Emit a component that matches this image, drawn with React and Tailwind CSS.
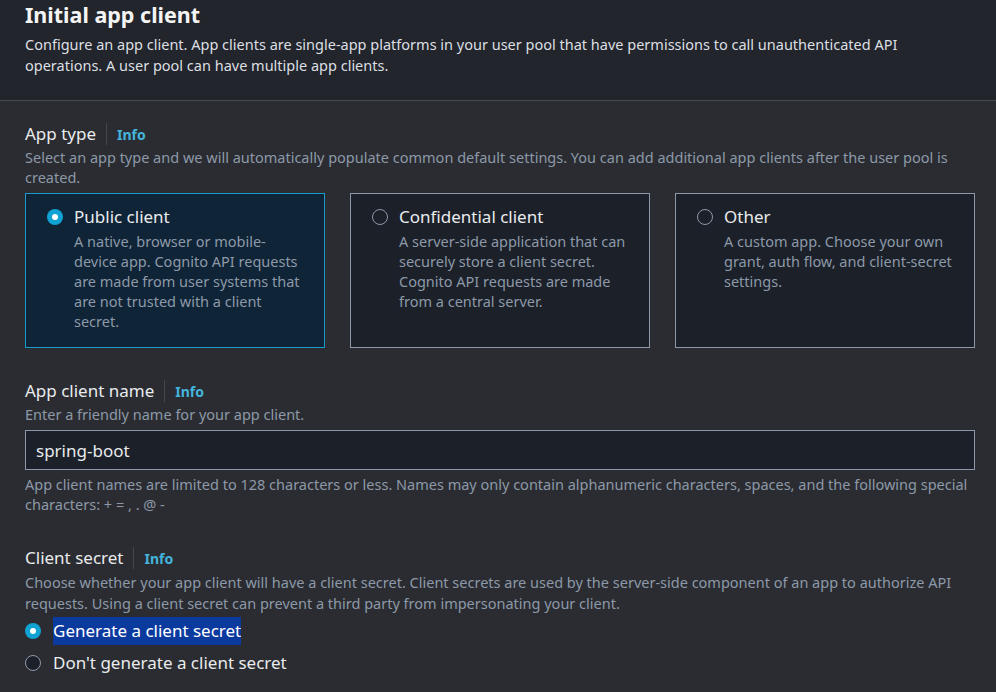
import React, { useState } from "react";

const font = { fontFamily: '"Noto Sans", "Open Sans", sans-serif' };

const appTypes = [
  {
    id: "public",
    title: "Public client",
    desc: "A native, browser or mobile-device app. Cognito API requests are made from user systems that are not trusted with a client secret.",
  },
  {
    id: "confidential",
    title: "Confidential client",
    desc: "A server-side application that can securely store a client secret. Cognito API requests are made from a central server.",
  },
  {
    id: "other",
    title: "Other",
    desc: "A custom app. Choose your own grant, auth flow, and client-secret settings.",
  },
];

const Radio = ({ checked }) =>
  checked ? (
    <span className="flex h-4 w-4 shrink-0 items-center justify-center rounded-full bg-[#0fa2d2]">
      <span className="h-[6px] w-[6px] rounded-full bg-white" />
    </span>
  ) : (
    <span className="h-4 w-4 shrink-0 rounded-full border-[1.5px] border-[#8d99a8] bg-[#1b2029]" />
  );

const FieldLabel = ({ children }) => (
  <div className="flex items-center h-6">
    <span className="text-[17px] leading-6 text-[#e9ebed]">{children}</span>
    <span className="ml-[10px] mr-[10px] h-[22px] w-px bg-[#414750]" />
    <a className="text-[14px] font-bold text-[#44b4dc] cursor-pointer">Info</a>
  </div>
);

const App = () => {
  const [appType, setAppType] = useState("public");
  const [name, setName] = useState("spring-boot");
  const [secret, setSecret] = useState("generate");

  return (
    <div className="min-h-screen w-[996px] bg-[#2a2c31]" style={font}>
      <header className="bg-[#22252b] border-b border-[#454a53] pl-[25px] pr-[40px] pt-[1px] pb-[24px]">
        <h1 className="text-[21.5px] leading-7 font-bold text-[#f4f4f4]">Initial app client</h1>
        <p className="mt-[5px] text-[14.5px] leading-[21px] text-[#dcdfe3]">
          Configure an app client. App clients are single-app platforms in your user pool that have permissions to call
          unauthenticated API operations. A user pool can have multiple app clients.
        </p>
      </header>

      <main className="pl-[25px] pr-[21px] pt-[21px]">
        <section>
          <FieldLabel>App type</FieldLabel>
          <p className="mt-[1px] text-[14.5px] leading-5 text-[#8d99a8]">
            Select an app type and we will automatically populate common default settings. You can add additional app
            clients after the user pool is created.
          </p>
          <div className="mt-[6px] grid grid-cols-3 gap-[25px]">
            {appTypes.map((t) => {
              const active = appType === t.id;
              return (
                <div
                  key={t.id}
                  onClick={() => setAppType(t.id)}
                  className={`cursor-pointer border pl-[21px] pr-4 pt-[11px] pb-[16px] ${
                    active ? "border-[#1a9bc7] bg-[#0f2437]" : "border-[#8d99a8] bg-[#1b2029]"
                  }`}
                >
                  <div className="flex items-center gap-[11px] h-6">
                    <Radio checked={active} />
                    <span className="text-[17px] leading-6 text-[#e9ebed]">{t.title}</span>
                  </div>
                  <p className="mt-[2px] pl-[27px] text-[14.5px] leading-5 text-[#8d99a8]">{t.desc}</p>
                </div>
              );
            })}
          </div>
        </section>

        <section className="mt-[31px]">
          <FieldLabel>App client name</FieldLabel>
          <p className="mt-[1px] text-[14.5px] leading-5 text-[#8d99a8]">Enter a friendly name for your app client.</p>
          <input
            value={name}
            onChange={(e) => setName(e.target.value)}
            className="mt-[6px] block h-10 w-full border border-[#8d99a8] bg-[#1b2029] px-[10px] text-[17px] text-[#e9ebed] outline-none"
          />
          <p className="mt-[4px] text-[14.5px] leading-5 text-[#8d99a8]">
            App client names are limited to 128 characters or less. Names may only contain alphanumeric characters,
            spaces, and the following special characters: + = , . @ -
          </p>
        </section>

        <section className="mt-[32px]">
          <FieldLabel>Client secret</FieldLabel>
          <p className="mt-[2px] text-[14.5px] leading-[21px] text-[#8d99a8]">
            Choose whether your app client will have a client secret. Client secrets are used by the server-side component
            of an app to authorize API requests. Using a client secret can prevent a third party from impersonating your
            client.
          </p>
          <div className="mt-[1px]">
            {[
              { id: "generate", label: "Generate a client secret" },
              { id: "none", label: "Don't generate a client secret" },
            ].map((o) => (
              <div
                key={o.id}
                onClick={() => setSecret(o.id)}
                className="flex h-8 cursor-pointer items-center gap-3"
              >
                <Radio checked={secret === o.id} />
                <span
                  className={`text-[17px] leading-7 text-[#e9ebed] ${
                    o.id === "generate" ? "bg-[#0b3a9f] text-white" : ""
                  }`}
                >
                  {o.label}
                </span>
              </div>
            ))}
          </div>
        </section>
      </main>
    </div>
  );
};

export default App;
